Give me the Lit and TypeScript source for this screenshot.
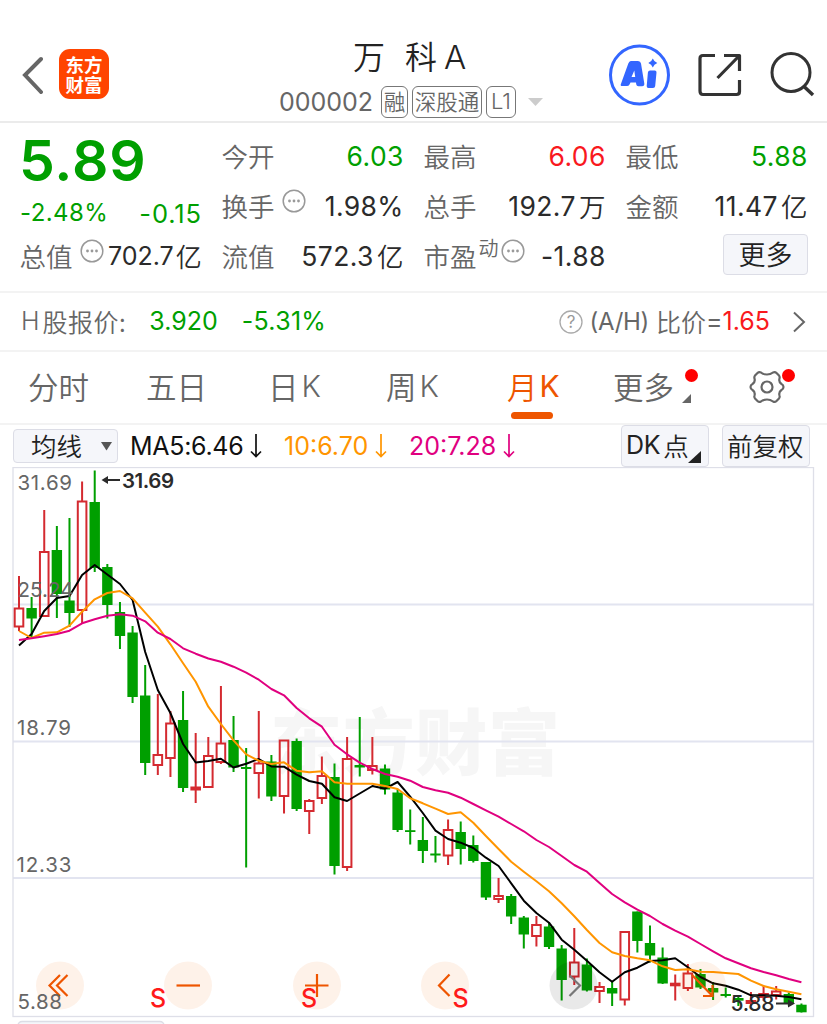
import { LitElement, html, svg, css } from "lit";
import { customElement, property } from "lit/decorators.js";

type Candle = [string, number, number, number, number];

// direction, high, body top, body bottom, low (chart units)
const CANDLES: Candle[] = [
  ["r", 576, 608.5, 626.5, 631], ["g", 597, 608, 618.5, 638], ["r", 510, 552, 616, 616],
  ["g", 526, 550, 594, 618], ["g", 518, 600.5, 613, 627], ["r", 481.5, 501.5, 610, 623],
  ["g", 470.5, 502, 568, 572], ["g", 564, 567, 605, 618.5], ["g", 602, 612, 636, 649],
  ["g", 626, 632.5, 697, 703], ["g", 665, 695.5, 763, 775], ["r", 694, 755, 765, 775],
  ["r", 711, 723.5, 758, 777], ["g", 691, 720, 788, 792], ["r", 733, 787.5, 789.5, 803],
  ["r", 737, 756, 787, 787], ["r", 686, 743.5, 762, 764], ["g", 716, 740, 767.5, 772],
  ["g", 748, 767, 769, 867.5], ["r", 711, 763.5, 773, 798.5], ["g", 755, 761.5, 796.5, 801],
  ["r", 740, 740.5, 796, 813.5], ["g", 738.5, 741, 809, 811], ["r", 799, 801, 811, 834],
  ["r", 756.5, 776, 798, 804], ["g", 763.5, 777, 866, 874.5], ["r", 737, 759, 867, 871],
  ["g", 717, 765, 767.5, 776.5], ["r", 737, 766, 770, 774.5], ["g", 764.5, 768.5, 789.5, 794.5],
  ["g", 789, 792.5, 830, 832], ["g", 809.5, 830.2, 832, 844.5], ["g", 817, 840, 851, 863],
  ["g", 836, 853.5, 855.5, 862.5], ["r", 819.5, 830, 855.5, 865], ["g", 821.5, 832, 849, 864.5],
  ["g", 835.5, 845, 861, 862.5], ["g", 862, 862, 897.5, 900], ["r", 878, 896, 899, 903],
  ["g", 894, 896, 916.5, 924], ["g", 916, 917.5, 934.5, 948.5], ["r", 916, 925, 936, 946.5],
  ["g", 922, 926.5, 947, 949], ["g", 945, 948.5, 980, 1000.5], ["r", 928, 962.5, 976.5, 985],
  ["g", 958.5, 964.5, 990.5, 991.5], ["r", 982, 987, 991, 1003], ["g", 982, 988, 993.5, 1006],
  ["r", 932, 932, 999.5, 1005.5], ["g", 911.5, 911.5, 941, 952.5], ["g", 925.5, 943, 955.5, 962.5],
  ["g", 947.5, 957.5, 983.5, 984], ["r", 974.5, 983.7, 985.3, 1000.5], ["r", 964, 973.5, 988, 991],
  ["g", 969, 974, 987.5, 989], ["g", 982, 988, 992.5, 1000], ["g", 987.5, 994, 996, 997.5],
  ["g", 995, 998, 1000.7, 1006], ["r", 992, 1001, 1003, 1005.5], ["r", 985.5, 994, 997, 1000.7],
  ["r", 986, 991.5, 995, 999.5], ["g", 992.5, 994, 1003.5, 1006], ["g", 1003.5, 1004.7, 1012.3, 1012.5],
];

const MA5 = [645.5, 634, 611, 598, 596, 575, 565, 574.5, 584, 600, 652, 690, 713, 744, 762.5, 761, 758.7, 767.5,
  763.7, 759, 766.5, 766.7, 774.7, 781, 783.7, 797.3, 801, 793.5, 786, 788.7, 782, 796.7, 813, 830.7, 839, 842.7,
  848, 857.7, 866, 883.3, 900.7, 913, 922.7, 939.7, 949.7, 960.7, 972.3, 981.7, 972.3, 967.7, 961, 960.3, 958.3,
  967.3, 977, 983.3, 985.7, 989.7, 995.3, 995.3, 995.7, 997, 999.3];
const MA10 = [631, 638, 632.7, 632.3, 625.7, 611.7, 599.3, 593, 591, 598.3, 612.7, 626.7, 644.3, 663.3, 681.7,
  706.7, 724, 740.3, 754.3, 760.7, 764, 762.3, 770.7, 772.3, 771.3, 782.3, 783.7, 783.7, 783.7, 786, 789, 798.3,
  803.3, 808.7, 814, 812.3, 822.7, 836, 849, 861.7, 871.7, 881.3, 891.3, 903.3, 916.3, 930, 943, 952.3, 956, 958.3,
  960.3, 966.3, 970, 969.3, 971.7, 972, 973, 974, 980.7, 986, 989.3, 991.7, 994.3];
const MA20 = [640, 638.3, 636.3, 634, 630.7, 623.3, 619.3, 615.7, 614.3, 615.7, 621.3, 632.7, 639, 648.3, 653.7,
  658.5, 661.7, 666.7, 672.7, 679.7, 689, 695.3, 708, 718.3, 726.7, 744.7, 754.3, 762.7, 769, 774, 776.7, 780.7,
  787, 790.3, 792.7, 797.7, 804, 810.3, 816.7, 824, 831.3, 840, 847, 856, 865, 871.7, 883, 894, 902.3, 909.7, 916,
  924, 930.7, 936.7, 944, 951.3, 958.3, 963.3, 968.3, 972, 975.3, 979, 982.3];

const STEP = 12.62;
const px = (i: number) => 19 + STEP * i;
const line = (v: number[]) => v.map((y, i) => `${px(i).toFixed(1)},${y}`).join(" ");

const FONT = css`
  :host {
    box-sizing: border-box;
    font-family: Inter, "Noto Sans CJK SC", sans-serif;
    font-weight: 400;
    color: #666;
  }
  * { box-sizing: border-box; }
  svg { display: block; flex: none; }
`;
const CJK = css`
  .cj { font-family: "Noto Sans CJK SC", sans-serif; font-weight: 350; }
`;

@customElement("info-dots")
class InfoDots extends LitElement {
  static styles = css`
    :host { display: block; flex: none; width: 24px; height: 24px; }
    svg { display: block; }
  `;
  render() {
    return html`<svg width="24" height="24" viewBox="0 0 24 24">
      <circle cx="12" cy="12" r="10.8" fill="none" stroke="#999" stroke-width="1.5"></circle>
      <circle cx="7.5" cy="12" r="1.4" fill="#999"></circle><circle cx="12" cy="12" r="1.4" fill="#999"></circle>
      <circle cx="16.5" cy="12" r="1.4" fill="#999"></circle></svg>`;
  }
}

@customElement("app-header")
class AppHeader extends LitElement {
  static styles = [FONT, CJK, css`
    :host { display: grid; grid-template-columns: 279px 290px 1fr; height: 123px; border-bottom: 2px solid #ebebeb; }
    .left { display: flex; align-items: flex-start; padding: 49px 0 0 21px; gap: 16px; }
    .back { margin-top: 7px; }
    .logo { width: 50px; height: 50px; border-radius: 11px; background: #ff4400; color: #fff; text-align: center;
      font: 700 18.5px/20px "Noto Sans CJK SC", sans-serif; padding-top: 5px; }
    .title { display: flex; align-items: baseline; padding-left: 74px; height: 40px; margin-top: 35px; line-height: 40px;
      font-size: 32px; color: #222; }
    .ke { margin-left: 20px; }
    .a { font-size: 33px; margin-left: 7px; font-weight: 350; }
    .sub { display: flex; align-items: center; height: 32px; margin-top: 11px; }
    .code { font-size: 25px; line-height: 32px; width: 102px; }
    .tag { height: 32px; border: 1.5px solid #777; border-radius: 6px; line-height: 28px; font-size: 21.5px;
      text-align: center; margin-right: 4px; white-space: nowrap; }
    .t1 { width: 27px; } .t3 { width: 70px; } .t2 { width: 30px; font-size: 22px; font-weight: 350; }
    .caret { margin-left: 8px; }
    .right { display: flex; padding: 44px 0 0 40px; }
    .share { margin: 9px 0 0 27px; } .search { margin: 7px 0 0 28px; }
  `];
  render() {
    return html`
      <div class="left">
        <svg class="back" width="22" height="38" viewBox="0 0 22 38"><path d="M20 3 L4 19 L20 36" fill="none" stroke="#666" stroke-width="4" stroke-linecap="round"></path></svg>
        <div class="logo">东方<br>财富</div>
      </div>
      <div>
        <div class="title"><span class="cj">万</span><span class="cj ke">科</span><span class="a">A</span></div>
        <div class="sub">
          <span class="code">000002</span>
          <span class="tag t1 cj">融</span><span class="tag t3 cj">深股通</span><span class="tag t2">L1</span>
          <svg class="caret" width="16" height="9" viewBox="0 0 16 9"><path d="M0 0 H15 L7.500 8Z" fill="#ccc"></path></svg>
        </div>
      </div>
      <div class="right">
        <svg width="62" height="62" viewBox="0 0 62 62">
          <circle cx="30.500" cy="31" r="29" fill="none" stroke="#3366ff" stroke-width="3"></circle>
          <path fill="#3366ff" fill-rule="evenodd" d="M21.500 17 h7.500 q2.600 0 3 2.600 l3.300 20 q.3 2.600 -2.200 2.600 h-3.600 q-2 0 -2.300-2 l-.2-1.700 h-5.500 l-1 2 q-.8 1.600-2.600 1.600 h-4.600 q-2.400 0-1.300-2.300 l7.300-20.200 q.9-2.300 2.500-2.600z M25.300 26.500 l-2.800 6.500 h3.700z"></path>
          <path fill="#3366ff" d="M41 26.500 h4.700 q2 0 1.800 2 l-1.300 13.400 q-.2 2-2.200 2 h-4.500 q-2 0-1.800-2 l1.200-13.400 q.3-2 2.100-2z M43.800 14.500 q1.200 3.300 4.500 4.500 q-3.300 1.200-4.500 4.500 q-1.200-3.300-4.500-4.500 q3.300-1.200 4.500-4.500z"></path>
        </svg>
        <svg class="share" width="44" height="44" viewBox="0 0 44 44"><g fill="none" stroke="#333" stroke-width="3.200" stroke-linecap="butt" stroke-linejoin="round"><path d="M17 2.500 H5 Q2 2.500 2 5.500 V38 Q2 41.500 5 41.500 H38.500 Q41.500 41.500 41.500 38.500 V27"></path><path d="M26 2.500 H41.500 V18 M41.500 2.500 L19.500 25"></path></g></svg>
        <svg class="search" width="46" height="46" viewBox="0 0 46 46"><g fill="none" stroke="#333" stroke-width="3"><circle cx="21" cy="21.500" r="19"></circle><path d="M34 35.500 L43 44" stroke-width="3.500"></path></g></svg>
      </div>`;
  }
}

@customElement("stat-cell")
class StatCell extends LitElement {
  @property() label = "";
  @property() value = "";
  @property() unit = "";
  @property() sup = "";
  @property() tone = "";
  @property({ type: Boolean }) info = false;
  @property({ type: Boolean }) dense = false;
  static styles = [FONT, CJK, css`
    :host { display: flex; justify-content: space-between; height: 50px; line-height: 50px; white-space: nowrap; }
    .l { display: flex; font-size: 26.5px; margin-left: -.5px; }
    .v { display: flex; font-size: 26.5px; color: #2b2b2b; letter-spacing: .4px; margin-right: -.8px; }
    .v.up { color: #f9191e; } .v.down { color: #009f00; }
    .v.dense { font-size: 25px; letter-spacing: 0; }
    .u { margin-left: 3px; }
    .dense .u { font-size: 26px; margin-left: 2px; }
    .i { margin: 8px 0 0 7px; }
    .s { font-size: 20px; line-height: 33px; margin-left: 2px; }
    .s + .i { margin-left: 2px; }
  `];
  render() {
    return html`<div class="l"><span class="cj">${this.label}</span>${this.sup ? html`<span class="cj s">${this.sup}</span>` : ""}${this.info ? html`<info-dots class="i"></info-dots>` : ""}</div>
      <div class="v ${this.tone} ${this.dense ? "dense" : ""}"><span>${this.value}</span>${this.unit ? html`<span class="cj u">${this.unit}</span>` : ""}</div>`;
  }
}

@customElement("quote-panel")
class QuotePanel extends LitElement {
  static styles = [FONT, CJK, css`
    :host { display: grid; grid-template-columns: repeat(4, 181px); grid-template-rows: repeat(3, 50px); column-gap: 21px;
      padding: 8px 20px 0; height: 170px; border-bottom: 2px solid #f3f3f3; color: #009f00; }
    .price { font-size: 57px; font-weight: 600; line-height: 59px; letter-spacing: .9px; margin-left: -1px; }
    .chg { display: flex; justify-content: space-between; align-items: center; line-height: 50px; }
    .pct { font-size: 24px; padding-top: 14px; letter-spacing: .4px; }
    .diff { font-size: 25.500px; padding-top: 16px; letter-spacing: .9px; margin-right: -1px; }
    .more { justify-self: end; width: 85px; height: 41px; margin: 3px -1px 0 0; background: #f5f6fa; border: 1.5px solid #dcdde6;
      border-radius: 4px; color: #222; font-size: 27px; line-height: 37px; text-align: center; }
  `];
  render() {
    return html`
      <div class="price">5.89</div>
      <stat-cell label="今开" value="6.03" tone="down"></stat-cell>
      <stat-cell label="最高" value="6.06" tone="up"></stat-cell>
      <stat-cell label="最低" value="5.88" tone="down"></stat-cell>
      <div class="chg"><span class="pct">-2.48%</span><span class="diff">-0.15</span></div>
      <stat-cell label="换手" value="1.98%" info></stat-cell>
      <stat-cell label="总手" value="192.7" unit="万"></stat-cell>
      <stat-cell label="金额" value="11.47" unit="亿"></stat-cell>
      <stat-cell label="总值" value="702.7" unit="亿" info dense></stat-cell>
      <stat-cell label="流值" value="572.3" unit="亿"></stat-cell>
      <stat-cell label="市盈" sup="动" value="-1.88" info></stat-cell>
      <div class="more cj">更多</div>`;
  }
}

@customElement("h-share-bar")
class HShareBar extends LitElement {
  static styles = [FONT, CJK, css`
    :host { display: flex; justify-content: space-between; height: 59px; line-height: 57px; padding: 0 21px; font-size: 25px;
      border-bottom: 2px solid #f3f3f3; white-space: nowrap; }
    div { display: flex; align-items: center; }
    .g { color: #009f00; } .g1 { margin-left: 23px; } .g2 { margin-left: 24px; letter-spacing: .3px; }
    .n { letter-spacing: .5px; }
    .r { color: #f9191e; }
    .p { margin: 0 7px 0 6px; font-size: 24px; letter-spacing: -.3px; }
    .h { margin-right: 3px; font-weight: 350; }
    .chev { margin-left: 22px; }
    .q { font-size: 17px; text-anchor: middle; fill: #999; }
  `];
  render() {
    return html`
      <div><span class="h">H</span><span class="cj n">股报价:</span><span class="g g1">3.920</span><span class="g g2">-5.31%</span></div>
      <div>
        <svg width="24" height="24" viewBox="0 0 24 24"><circle cx="12" cy="12" r="11" fill="none" stroke="#aaa" stroke-width="1.300"></circle><text class="q" x="12" y="18">?</text></svg>
        <span class="p">(A/H)</span><span class="cj">比价</span><span>=</span><span class="r">1.65</span>
        <svg class="chev" width="14" height="22" viewBox="0 0 14 22"><path d="M2 1.500 L12 11 L2 20.500" fill="none" stroke="#666" stroke-width="2"></path></svg>
      </div>`;
  }
}

@customElement("period-tabs")
class PeriodTabs extends LitElement {
  static styles = [FONT, CJK, css`
    :host { display: grid; grid-template-columns: 118px 122px 118px 121px 106px 136px 1fr; padding-left: 28px; height: 73px;
      border-bottom: 2px solid #f3f3f3; font-size: 30.5px; line-height: 69px; }
    .tab { display: flex; position: relative; white-space: nowrap; }
    .k { margin-left: 3px; font-size: 30px; font-weight: 350; }
    .on { color: #ee5500; }
    .on .k { font-weight: 400; margin-left: 2px; }
    .on::after { content: ""; position: absolute; left: 4px; top: 60px; width: 42px; height: 6.500px; border-radius: 4px; background: #ee5500; }
    .dot { position: absolute; top: 17px; width: 13px; height: 13px; border-radius: 50%; background: #ff0000; }
    .d1 { left: 72px; } .d2 { left: 33px; }
    .corner { margin: 42px 0 0 8px; }
    .gear { margin-top: 18px; }
  `];
  render() {
    return html`
      <div class="tab"><span class="cj">分时</span></div>
      <div class="tab"><span class="cj">五日</span></div>
      <div class="tab"><span class="cj">日</span><span class="k">K</span></div>
      <div class="tab"><span class="cj">周</span><span class="k">K</span></div>
      <div class="tab on"><span class="cj">月</span><span class="k">K</span></div>
      <div class="tab"><span class="cj">更多</span><svg class="corner" width="9" height="9"><path d="M9 0 V9 H0Z" fill="#666"></path></svg><i class="dot d1"></i></div>
      <div class="tab"><svg class="gear" width="36" height="34" viewBox="-18 -17 36 34"><g fill="none" stroke="#666" stroke-width="2.200" stroke-linejoin="round">
        <path d="M-6 -14.500 Q-8 -15.500 -9.500 -14 L-12 -11.500 Q-13 -10 -12.500 -8.500 Q-11.500 -5 -14.500 -3 Q-16.500 -2 -16.500 0 Q-16.500 2 -14.500 3 Q-11.500 5 -12.500 8.500 Q-13 10 -12 11.500 L-9.500 14 Q-8 15.500 -6 14.500 Q-3.500 12.500 0 12.500 Q3.500 12.500 6 14.500 Q8 15.500 9.500 14 L12 11.500 Q13 10 12.500 8.500 Q11.500 5 14.500 3 Q16.500 2 16.500 0 Q16.500 -2 14.500 -3 Q11.500 -5 12.500 -8.500 Q13 -10 12 -11.500 L9.500 -14 Q8 -15.500 6 -14.500 Q3.500 -12.500 0 -12.500 Q-3.500 -12.500 -6 -14.500Z"></path><circle r="5.500"></circle></g></svg><i class="dot d2"></i></div>`;
  }
}

@customElement("ma-bar")
class MaBar extends LitElement {
  static styles = [FONT, CJK, css`
    :host { display: flex; align-items: center; height: 42px; padding: 0 17px 0 13px; font-size: 25px; line-height: 40px; white-space: nowrap; }
    .btn { height: 42px; background: #f5f6fa; border: 1.500px solid #dcdde6; border-radius: 4px; color: #222; display: flex; line-height: 38px; }
    .ma { width: 105px; height: 34px; line-height: 30px; padding-left: 17px; margin-right: 12px; font-size: 25.500px; }
    .tri { margin: 12px 0 0 19px; }
    .v { display: flex; align-items: center; }
    .v svg { margin-left: 7px; }
    .a { color: #111; width: 154px; letter-spacing: -.3px; } .b { color: #ff9500; width: 125px; } .c { color: #e0007f; flex: 1; }
    .dk { width: 88px; padding-left: 4px; margin-right: 13px; letter-spacing: -.3px; }
    .dk .cj { margin-left: 3px; font-size: 25.500px; }
    .cor { margin: 25px 0 0 0; }
    .fq { width: 88px; padding-left: 4px; font-size: 25.500px; }
  `];
  private item(cls: string, text: string) {
    return html`<span class="v ${cls}">${text}<svg width="12" height="24" viewBox="0 0 12 24"><path d="M6 0 V22 M1 17.500 L6 22.500 L11 17.500" fill="none" stroke="currentColor" stroke-width="1.700"></path></svg></span>`;
  }
  render() {
    return html`
      <div class="btn ma"><span class="cj">均线</span><svg class="tri" width="11" height="9"><path d="M0 0 H11 L5.500 8.500Z" fill="#555"></path></svg></div>
      ${this.item("a", "MA5:6.46")}${this.item("b", "10:6.70")}${this.item("c", "20:7.28")}
      <div class="btn dk"><span>DK</span><span class="cj">点</span><svg class="cor" width="13" height="12"><path d="M13 0 V12 H0Z" fill="#222"></path></svg></div>
      <div class="btn fq cj">前复权</div>`;
  }
}

@customElement("k-chart")
class KChart extends LitElement {
  static styles = [FONT, css`
    :host { display: block; height: 557px; }
    .mark { font: 900 72px "Noto Sans CJK SC", sans-serif; fill: #f6f6f6; }
    .ax { font-size: 20.500px; fill: #666; }
    .pk { font-size: 20.500px; font-weight: 600; fill: #2b2b2b; }
    .last { font-size: 21px; font-weight: 500; fill: #2b2b2b; }
    .s { font-size: 25px; font-weight: 500; fill: #ff1a1a; }
    .ln { fill: none; stroke-width: 2; stroke-linejoin: round; }
    .ic { fill: none; stroke: #ee5500; stroke-width: 2.200; }
  `];
  private candle([dir, hi, top, bot, lo]: Candle, i: number) {
    const x = px(i);
    if (dir === "g") {
      return svg`<g fill="#009f00"><rect x=${x - 1} y=${hi} width="2" height=${lo - hi}></rect><rect x=${x - 5.2} y=${top} width="10.4" height=${bot - top}></rect></g>`;
    }
    return svg`<g stroke="#d42a30" stroke-width="2" fill="none"><path d="M${x} ${hi} V${top} M${x} ${bot} V${lo}"></path><rect x=${x - 4.3} y=${top} width="8.6" height=${bot - top}></rect></g>`;
  }
  render() {
    return html`<svg width="827" height="557" viewBox="0 467 827 557">
      <text class="mark" x="270" y="769" textLength="290">东方财富</text>
      <g stroke="#e2e4f0" stroke-width="2"><path d="M13 604.500 H813 M13 741.500 H813 M13 878 H813"></path></g>
      <rect x="13" y="467.500" width="800.500" height="549" fill="none" stroke="#dedfe8" stroke-width="1.300"></rect>
      <rect x="18" y="1021.500" width="146" height="40" rx="4" fill="#f5f6fa" stroke="#dcdde6" stroke-width="1.500"></rect>
      ${CANDLES.map((c, i) => this.candle(c, i))}
      <polyline class="ln" stroke="#000" points=${line(MA5)}></polyline>
      <polyline class="ln" stroke="#ff9500" points=${line(MA10)}></polyline>
      <polyline class="ln" stroke="#e0007f" points=${line(MA20)}></polyline>
      <g fill="#ee6600" fill-opacity=".085">${[60, 188, 317, 445, 702].map((x) => svg`<circle cx=${x} cy="985.500" r="24"></circle>`)}</g>
      <circle cx="573.500" cy="985.500" r="24" fill="#000" fill-opacity=".085"></circle>
      <g class="ic">
        <path d="M60 975 L49.500 985.500 L60 996 M67.500 975 L57 985.500 L67.500 996"></path>
        <path d="M176.500 985.500 H200"></path><path d="M305 985.500 H328.500 M317 974 V997"></path>
        <path d="M449.500 974.500 L439 985.500 L449.500 996"></path>
        <path d="M692 975 L712 995.500 M703 996 H712.500 V985"></path>
        <path d="M569.500 975.500 L580 985.500 L569.500 996" stroke="#777"></path>
      </g>
      <g class="ax">
        <text x="17.500" y="489.500" textLength="54.500">31.69</text><text x="17.500" y="597" textLength="56">25.24</text>
        <text x="17" y="735" textLength="54">18.79</text><text x="16.500" y="871.500" textLength="55">12.33</text>
        <text x="17.500" y="1008.500" textLength="44.500">5.88</text>
      </g>
      <g class="s"><text x="150" y="1006.500">S</text><text x="301" y="1006.500">S</text><text x="452.500" y="1006.500">S</text></g>
      <text class="pk" x="122" y="487.500" textLength="52">31.69</text>
      <path d="M101.500 480 L108 476 V479 H120 V481 H108 V484Z" fill="#2b2b2b"></path>
      <text class="last" x="730.500" y="1010.500" textLength="44">5.88</text>
      <path d="M795 1003.500 L788 999.500 V1002.500 H776 V1004.500 H788 V1007.500Z" fill="#2b2b2b"></path>
    </svg>`;
  }
}

@customElement("app-root")
class AppRoot extends LitElement {
  static styles = css`
    :host { display: flex; flex-direction: column; width: 827px; height: 1024px; overflow: hidden; background: #fff; }
    :host > * { flex: none; }
  `;
  render() {
    return html`<app-header></app-header><quote-panel></quote-panel><h-share-bar></h-share-bar>
      <period-tabs></period-tabs><ma-bar></ma-bar><k-chart></k-chart>`;
  }
}
